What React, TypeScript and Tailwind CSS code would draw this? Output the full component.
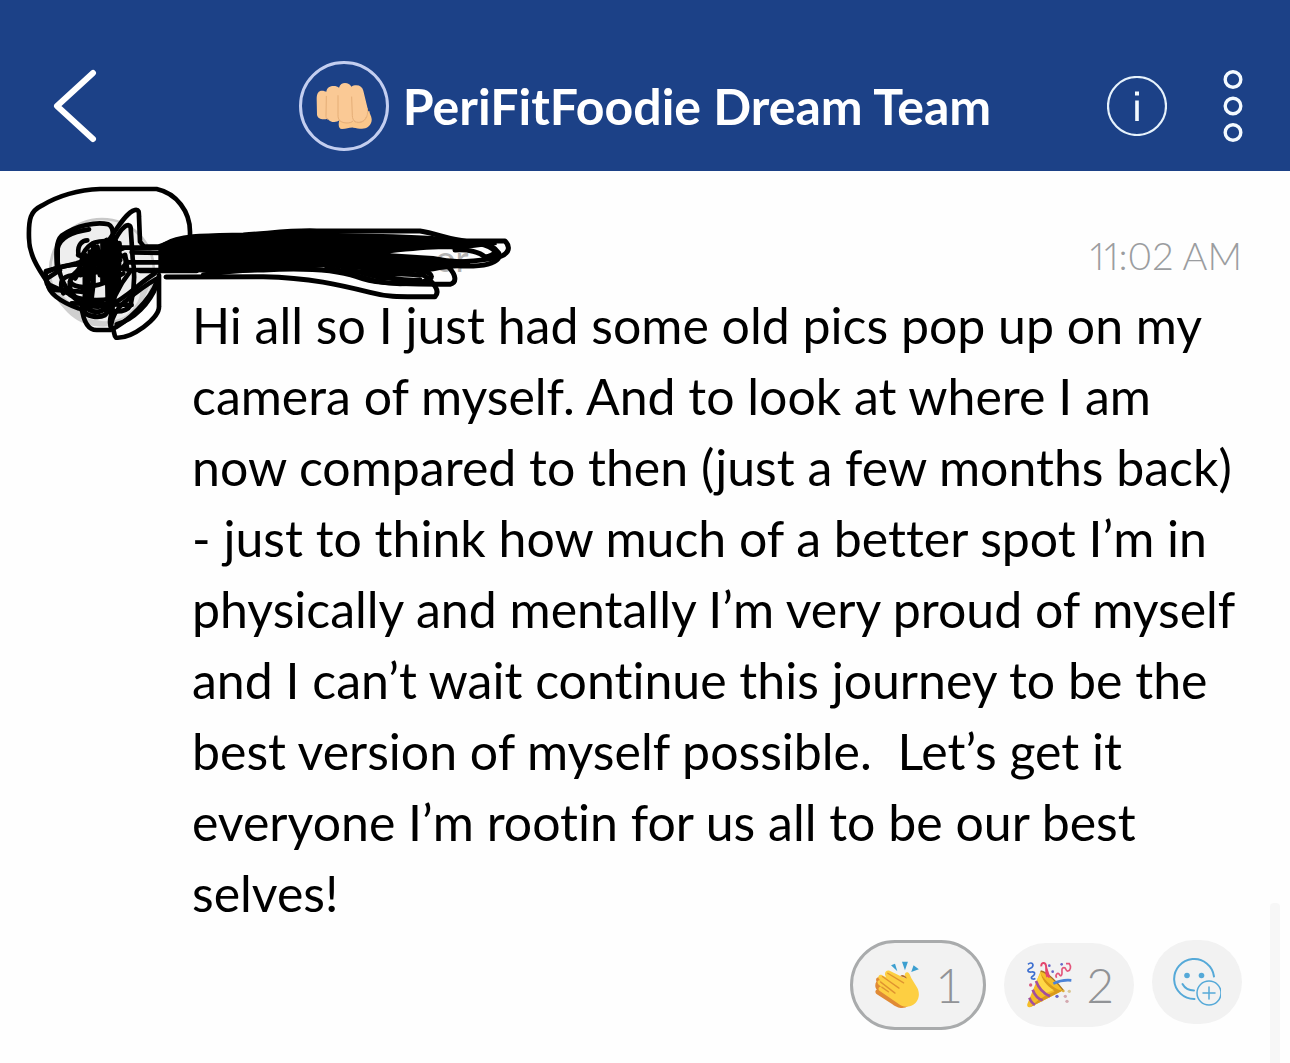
import React from "react";

const messageLines = [
  "Hi all so I just had some old pics pop up on my",
  "camera of myself. And to look at where I am",
  "now compared to then (just a few months back)",
  "- just to think how much of a better spot I’m in",
  "physically and mentally I’m very proud of myself",
  "and I can’t wait continue this journey to be the",
  "best version of myself possible.  Let’s get it",
  "everyone I’m rootin for us all to be our best",
  "selves!",
];

function FistIcon() {
  return (
    <svg viewBox="0 0 168 138" className="h-[46px] w-14" aria-hidden="true">
      <path
        d="M70 112c-4 12-2 26 8 26 14 0 22-5 34-4 12 2 26 5 36 2 12-4 20-16 19-28-1-10-6-14-7-24z"
        fill="#fbc78b"
      />
      <path
        d="M2 48C2 30 8 23 18 23c6 0 10 2 13 3 2-12 11-17 22-17 7 0 12 2 16 5C72 4 79 0 87 0c9 0 15 4 19 11 4-3 9-4 15-4 11 0 18 6 21 16l12 50c8 22-2 45-22 47-8 1-14-1-19-4-7 4-34 6-43-4-9 8-28 7-35-5C22 110 6 110 3 96z"
        fill="#fac995"
      />
      <path
        d="M31 40l-1 60c0 4 2 8 5 9M66 38v56c0 10 1 14 5 18M107 42l2 56c0 8 3 14 8 18M70 112c6 9 34 12 41 2M117 116c14 6 28 0 34-14"
        fill="none"
        stroke="#e5ae77"
        strokeWidth="3"
        strokeLinecap="round"
      />
      <path d="M154 76c4 26-8 44-30 43" fill="none" stroke="#e9b37c" strokeWidth="3" />
    </svg>
  );
}

function ClapIcon() {
  return (
    <svg viewBox="0 0 135 145" className="h-12 w-[45px]" aria-hidden="true">
      <path
        d="M4 62c-4-8 2-16 11-12l60 22 40 40c-6 22-22 32-38 30-10-1-18-6-26-12L4 100c-5-5-4-12 1-13-6-7-6-18-1-25z"
        fill="#e08a35"
      />
      <path
        d="M30 42c-2-10 6-16 15-12l45 22c-2-10 0-18 6-18 7 0 9 8 13 17l18 30c12 22 2 50-22 56-16 4-28-2-38-10L14 91c-8-6-2-16 6-12l-10-8c-7-7-1-16 7-12l-5-4c-6-8 1-17 9-12l12 6z"
        fill="#fdcf42"
      />
      <path
        d="M38 37l48 29M22 47l50 35M16 63l44 34M20 79l20 14"
        fill="none"
        stroke="#df9430"
        strokeWidth="4"
        strokeLinecap="round"
      />
      <path d="M76 45c6-6 16 0 20 8l-8-3z" fill="#b66d2b" />
      <path d="M48 13l12-5 7 23zM81 2h18l-9 26zM116 13l16 12-23 8z" fill="#3c9fd0" />
    </svg>
  );
}

function PartyIcon() {
  return (
    <svg viewBox="0 0 138 140" className="h-12 w-[46px]" aria-hidden="true">
      <path d="M44 28C58 30 100 70 112 86L14 136c-8 3-12-2-10-9z" fill="#f5bd27" />
      <path d="M44 28c-5 12 44 62 68 58L14 136c16-18 48-40 72-46C66 82 44 52 44 28z" fill="#d99a1b" />
      <path d="M44 34c0 16 18 38 40 52L50 96C38 82 32 66 32 56z" fill="#ffd746" />
      <path
        d="M30 58c8 22 24 38 42 46M20 84c6 16 18 28 30 32M10 108c4 10 10 18 17 21"
        fill="none"
        stroke="#a34f9c"
        strokeWidth="8"
      />
      <path d="M44 28c20 4 52 36 68 58" fill="none" stroke="#a8731d" strokeWidth="4" />
      <path
        d="M6 8c8-8 18-2 14 6S4 20 6 28s18-2 20 6-10 10-10 14 8 6 12 2"
        fill="none"
        stroke="#3d6fd0"
        strokeWidth="5"
      />
      <path
        d="M46 14C44 2 58 0 60 12s-2 22 4 34M60 16l10 32"
        fill="none"
        stroke="#e4466e"
        strokeWidth="6"
      />
      <path
        d="M92 48c-6-8 4-18 8-10s8 4 8-4-2-16 6-16 4 12 12 10 10-14 4-22h-10"
        fill="none"
        stroke="#e3557c"
        strokeWidth="5"
      />
      <path d="M82 66c16-8 34-12 54-10" fill="none" stroke="#4b83d8" strokeWidth="8" />
      <g fill="#6667c7">
        <circle cx="70" cy="12" r="4" />
        <circle cx="80" cy="30" r="4" />
        <circle cx="93" cy="104" r="5" />
        <circle cx="107" cy="8" r="4" />
      </g>
      <g fill="#d3a9b0">
        <circle cx="14" cy="70" r="5" fill="#d95d84" />
        <circle cx="118" cy="104" r="5" />
        <circle cx="130" cy="89" r="5" fill="#d8c796" />
        <circle cx="123" cy="119" r="5" />
        <circle cx="112" cy="88" r="4" fill="#dcae35" />
      </g>
    </svg>
  );
}

function AddReactionIcon() {
  return (
    <svg
      viewBox="0 0 48 48"
      className="size-12"
      fill="none"
      stroke="#55a9d8"
      strokeWidth="2"
      strokeLinecap="round"
      aria-hidden="true"
    >
      <path d="M41 18.5A20 20 0 1 0 21.5 41" />
      <path d="M9.5 26c2.500 4.500 6.500 6.500 11.500 6.500" />
      <circle cx="36" cy="35" r="12" strokeWidth="1.500" />
      <path d="M36 29v12M30 35h12" strokeWidth="1.500" />
      <circle cx="14" cy="17.500" r="2.800" fill="#55a9d8" stroke="none" />
      <circle cx="28.500" cy="17.500" r="2.800" fill="#55a9d8" stroke="none" />
    </svg>
  );
}

// avatar with the sender's name crossed out by hand
function CrossedOutSender() {
  return (
    <svg
      viewBox="0 0 1530 540"
      className="absolute left-2.5 top-1 h-[180px] w-[510px]"
      role="img"
      aria-label="Sender hidden"
    >
      <circle cx="276" cy="288" r="156" fill="#eeeeee" stroke="#c9c9c9" strokeWidth="8" />
      <path
        d="M384 330C410 370 350 430 310 445l-80-15-100-95c20 70 70 120 150 120 80-5 130-70 145-150z"
        fill="#cfcfcf"
      />
      <text x="1376" y="292" textAnchor="end" fontSize="108" fill="#b4b4b4">
        or
      </text>

      <g fill="none" stroke="#000" strokeWidth="14" strokeLinecap="round" strokeLinejoin="round">
        <path d="M205 400C150 380 110 350 115 325C80 275 57 235 57 190C55 130 62 108 95 92C140 65 200 45 270 42H440C500 55 540 110 540 170V215" />
        <path d="M142 290C138 240 136 200 155 182C200 150 260 140 295 148C308 154 310 172 308 190" />
        <path d="M237 163C190 170 150 185 143 220V262C150 320 180 370 225 390" />
        <path d="M205 235C202 208 218 196 232 196" />
        <path d="M290 205C310 180 345 112 375 105C388 103 387 112 387 125L390 200L402 215H540" />
        <path d="M315 195C335 155 358 140 362 158L368 250C376 300 372 350 362 390C352 408 330 412 300 408" />
        <path d="M215 395C220 440 235 465 260 465H300C350 445 425 370 440 320" />
        <path d="M308 400C300 430 296 450 306 458C314 464 310 480 318 488C365 492 448 430 447 395V300" />
        <path d="M302 455C305 430 320 400 345 380C380 350 425 320 443 310" />
        <path d="M440 330C420 385 370 435 320 448" />
        <path d="M108 288L200 265L340 220M108 288C105 320 110 340 135 345L215 350" />
        <path d="M108 292C150 270 210 262 290 272L360 285H540" />
        <path d="M112 310L150 285M120 330L175 355C190 372 250 380 300 372" />
        <path d="M160 355C140 310 170 300 200 300L330 282C350 270 360 250 330 240" />
        <path d="M200 370C170 340 175 310 200 290C230 260 200 250 235 215C260 190 320 195 330 215" />
        <path d="M330 218H560M365 232L540 235M350 262H460L540 265M390 288H560" />
        <path d="M360 290C320 340 320 360 300 390C350 370 380 330 435 295" />
        <path d="M180 320C200 350 280 335 340 295M185 385L365 390" />
      </g>

      <g fill="none" stroke="#000" strokeWidth="15" strokeLinecap="round" strokeLinejoin="round">
        <path d="M225 240V410M240 230L230 400M250 205V325L240 405M262 215L270 300M278 205V320M290 195L294 400M304 200V390M318 200L312 375M328 205L325 340" />
        <path d="M225 260L320 215M215 285L325 235M212 300L330 255M215 350L240 330M205 240L320 270M225 380C245 400 285 400 305 375M215 405C230 425 265 430 285 420L310 390" />
        <path d="M345 240L350 275M255 280L300 320M195 310C205 290 225 280 245 285M240 405C260 418 290 405 300 385" />
      </g>

      <path
        d="M445 208C490 190 530 184 600 180L820 170L1150 178C1250 182 1330 185 1365 197L1460 192V210L1340 225C1300 220 1230 225 1140 235L1270 243L1310 250L1380 255V275L1290 285C1250 295 1190 295 1120 290L950 277C850 282 700 300 560 292L445 290Z"
      />
      <g fill="none" stroke="#000" strokeWidth="15" strokeLinecap="round" strokeLinejoin="round">
        <path d="M465 208C510 180 600 182 700 180C780 175 850 165 920 168H1230C1280 175 1320 195 1370 198H1485C1502 215 1498 235 1470 245C1430 255 1370 262 1290 262" />
        <path d="M1360 200C1430 204 1460 220 1465 250C1445 275 1380 278 1290 268" />
        <path d="M1335 225C1375 222 1410 232 1425 246C1440 244 1450 239 1458 230M1405 202C1435 206 1455 219 1466 234" />
        <path d="M468 306L760 305C900 308 990 330 1080 352C1140 368 1170 365 1275 365C1290 350 1280 325 1220 285" />
        <path d="M580 300C640 290 700 285 760 285C850 280 960 278 1040 305C1080 320 1120 328 1320 328C1342 322 1338 300 1315 275" />
        <path d="M950 280C1020 286 1070 326 1170 326C1220 326 1265 318 1264 306C1264 295 1245 285 1230 285" />
        <path d="M980 287C1060 280 1120 320 1230 315M1000 280L1120 310M1040 290L1240 300" />
      </g>
    </svg>
  );
}

function Header() {
  return (
    <header className="grid grid-cols-[1fr_auto_1fr] items-center bg-[#1c4187] px-[47px] pt-[61px] pb-5 text-white">
      <button type="button" aria-label="Back" className="justify-self-start pl-1.5">
        <svg
          viewBox="0 0 44 74"
          className="h-[74px] w-11"
          fill="none"
          stroke="currentColor"
          strokeWidth="6"
          strokeLinecap="round"
          strokeLinejoin="round"
        >
          <path d="M40 4L4 37l36 33" />
        </svg>
      </button>

      <div className="flex items-center gap-3.5">
        <div className="flex size-[90px] items-center justify-center rounded-full border-3 border-[#c3cef0]">
          <FistIcon />
        </div>
        <h1 className="text-[50px] leading-[56px] font-bold whitespace-nowrap">
          PeriFitFoodie Dream Team
        </h1>
      </div>

      <div className="flex items-center gap-14 justify-self-end">
        <button type="button" aria-label="Group info">
          <svg viewBox="0 0 60 60" className="size-[60px]">
            <circle cx="30" cy="30" r="29" fill="none" stroke="#e6f2fc" strokeWidth="2.200" />
            <path d="M28 15.500h4v4h-4zM28.200 24.500h3.600V45h-3.600z" fill="#f4faff" />
          </svg>
        </button>
        <button type="button" aria-label="More options">
          <svg viewBox="0 0 20 74" className="h-[74px] w-5" fill="none" stroke="#f4faff" strokeWidth="3.400">
            <circle cx="10" cy="10.500" r="7.800" />
            <circle cx="10" cy="37" r="7.800" />
            <circle cx="10" cy="63.500" r="7.800" />
          </svg>
        </button>
      </div>
    </header>
  );
}

function Reactions() {
  return (
    <div className="flex items-center justify-end gap-[18px]">
      <button
        type="button"
        className="flex h-[90px] w-[136px] items-center justify-between rounded-full border-3 border-[#a9abac] bg-[#f2f2f2] pr-5 pl-[22px]"
      >
        <ClapIcon />
        <span>1</span>
      </button>
      <button
        type="button"
        className="flex h-[84px] w-[130px] items-center justify-between rounded-full bg-[#f2f2f2] pr-5 pl-[22px]"
      >
        <PartyIcon />
        <span>2</span>
      </button>
      <button
        type="button"
        aria-label="Add reaction"
        className="flex h-[84px] w-[90px] items-center justify-center self-start rounded-full bg-[#f2f2f2]"
      >
        <AddReactionIcon />
      </button>
    </div>
  );
}

const App = () => {
  return (
    <div className="relative min-h-screen bg-[#fefefe] font-['Lato','Liberation_Sans',sans-serif] [font-variant-ligatures:none]">
      <Header />
      <main>
        <article className="relative pt-14 pr-12 pl-48">
          <CrossedOutSender />
          <time className="block text-right text-[38px] leading-[56px] font-light text-[#9b9da0] proportional-nums">
            11:02 AM
          </time>
          <p className="mt-[7px] text-[50px] leading-[71px] whitespace-pre text-black">
            {messageLines.join("\n")}
          </p>
          <div className="mt-[11px] text-[48px] font-light text-[#919396]">
            <Reactions />
          </div>
        </article>
      </main>
      <div className="absolute right-2.5 bottom-0 h-40 w-2.5 rounded-t bg-[#f7f7f7]" />
    </div>
  );
};

export default App;
